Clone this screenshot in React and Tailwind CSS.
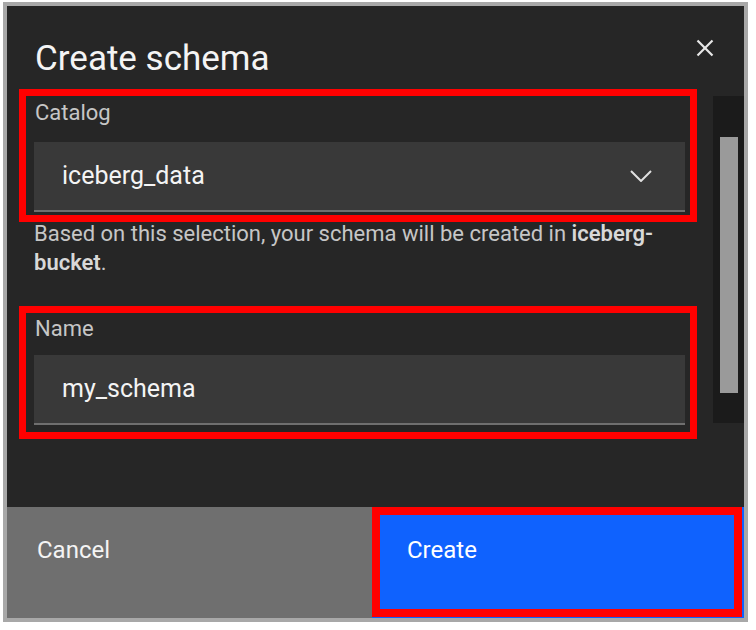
import React from 'react'

function Field({ label, value, chevron, labelPt, labelMb, boxPb }) {
  return (
    <div className={`border-[7px] border-[#ff0000] pl-[8px] pr-[5px] ${labelPt} ${boxPb}`}>
      <div className={`text-[22px] leading-[24px] text-[#c6c6c6] pl-px ${labelMb}`}>{label}</div>
      <div className="h-[70px] bg-[#393939] border-b-2 border-[#6f6f6f] flex items-center justify-between pl-[28px] pr-[33px]">
        <span className="text-[25px] text-[#f4f4f4]">{value}</span>
        {chevron && (
          <svg width="22" height="12" viewBox="0 0 22 12" fill="none" stroke="#e0e0e0" strokeWidth="2">
            <polyline points="1,1 11,11 21,1" />
          </svg>
        )}
      </div>
    </div>
  )
}

export default function App() {
  return (
    <div className="w-[756px] h-[630px] bg-white pt-[2px] pl-[3px]" style={{ fontFamily: 'Roboto, "Liberation Sans", sans-serif' }}>
      <div className="w-[745px] h-[620px] border-4 border-[#a8a8a8] bg-[#262626] flex flex-col">
        {/* header */}
        <div className="h-[83px] flex justify-between pl-[28px] pr-[30px]">
          <h2 className="pt-[35px] text-[35px] leading-none text-[#f4f4f4]">Create schema</h2>
          <button className="mt-[33px] self-start" aria-label="Close">
            <svg width="18" height="18" viewBox="0 0 18 18" fill="none" stroke="#e8e8e8" strokeWidth="2.2">
              <line x1="1.5" y1="1.5" x2="16.5" y2="16.5" />
              <line x1="16.5" y1="1.5" x2="1.5" y2="16.5" />
            </svg>
          </button>
        </div>

        {/* body */}
        <div className="flex-1 flex pl-[12px]">
          <div className="w-[678px]">
            <Field label="Catalog" value="iceberg_data" chevron labelPt="pt-[5px]" labelMb="mb-[17px]" boxPb="pb-[3px]" />
            <p className="-mt-[3px] pl-[15px] pr-[8px] text-[22px] leading-[29px] text-[#c6c6c6] mb-[29px]">
              Based on this selection, your schema will be created in <span className="font-semibold text-[#d8d8d8]">iceberg-bucket</span>.
            </p>
            <Field label="Name" value="my_schema" labelPt="pt-[4px]" labelMb="mb-[14px]" boxPb="pb-[7px]" />
          </div>
          <div className="ml-[16px] mt-[7px] w-[31px] h-[327px] bg-[#1b1b1b] pl-[7px] pt-[41px]">
            <div className="w-[18px] h-[256px] bg-[#9a9a9a]" />
          </div>
        </div>

        {/* footer */}
        <div className="h-[111px] flex">
          <button className="w-[365px] h-full bg-[#6f6f6f] text-left pl-[30px] pt-[28px] flex items-start text-[24px] leading-[30px] text-[#f4f4f4]">
            Cancel
          </button>
          <button className="flex-1 h-full bg-[#0f62fe] pr-[2px] pb-[1px] flex">
            <div className="flex-1 border-[8px] border-[#ff0000] pl-[27px] pt-[20px] text-left text-[24px] leading-[30px] text-white">
              Create
            </div>
          </button>
        </div>
      </div>
    </div>
  )
}
